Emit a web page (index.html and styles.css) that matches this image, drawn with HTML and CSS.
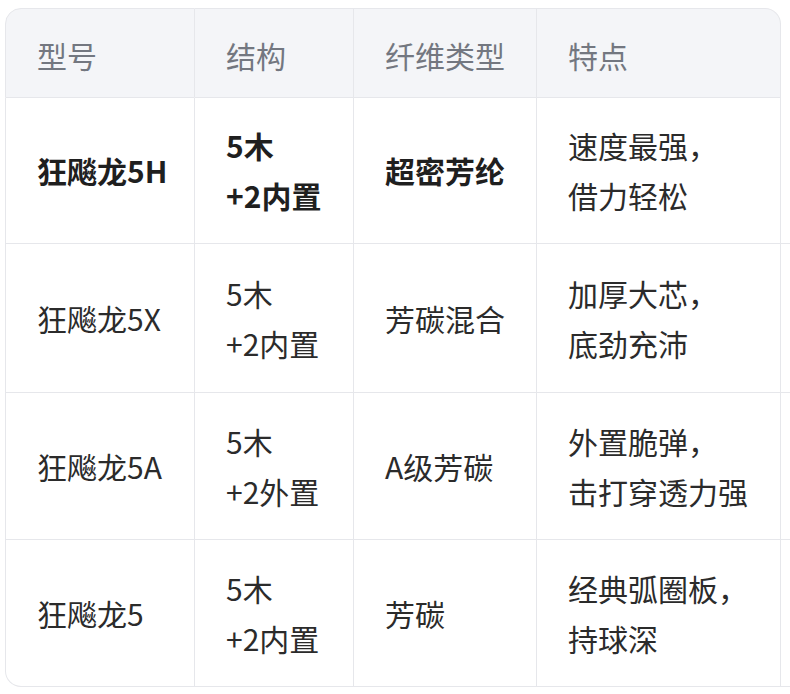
FILE: index.html
```html
<!DOCTYPE html>
<html lang="zh">
<head>
<meta charset="utf-8">
<link rel="stylesheet" href="styles.css">
</head>
<body>
<div class="wrap">
<table class="specs">
  <thead>
    <tr>
      <th class="c1">型号</th>
      <th class="c2">结构</th>
      <th class="c3">纤维类型</th>
      <th class="c4">特点</th>
      <th class="c5"></th>
    </tr>
  </thead>
  <tbody>
    <tr class="first">
      <td class="strong">狂飚龙5H</td>
      <td class="strong">5木<br>+2内置</td>
      <td class="strong">超密芳纶</td>
      <td>速度最强，<br>借力轻松</td>
      <td class="c5"></td>
    </tr>
    <tr class="tall">
      <td>狂飚龙5X</td>
      <td>5木<br>+2内置</td>
      <td>芳碳混合</td>
      <td>加厚大芯，<br>底劲充沛</td>
      <td class="c5"></td>
    </tr>
    <tr>
      <td>狂飚龙5A</td>
      <td>5木<br>+2外置</td>
      <td>A级芳碳</td>
      <td>外置脆弹，<br>击打穿透力强</td>
      <td class="c5"></td>
    </tr>
    <tr class="last">
      <td>狂飚龙5</td>
      <td>5木<br>+2内置</td>
      <td>芳碳</td>
      <td>经典弧圈板，<br>持球深</td>
      <td class="c5"></td>
    </tr>
  </tbody>
</table>
</div>
</body>
</html>
```

FILE: styles.css
```css
html, body {
  margin: 0;
  overflow: hidden;
  background: #ffffff;
}
body {
  padding: 8px 0 0 5px;
  font-family: "Noto Sans CJK SC", "Noto Sans", sans-serif;
}
.wrap {
  width: 806px;
}
.specs {
  border-collapse: separate;
  border-spacing: 0;
  table-layout: fixed;
  width: 806px;
  font-size: 30px;
  line-height: 50px;
  color: #2b2b2b;
}
.specs th,
.specs td {
  box-sizing: border-box;
  text-align: left;
  vertical-align: middle;
  white-space: nowrap;
  border-bottom: 1px solid #e6e7eb;
  border-right: 1px solid #e6e7eb;
}
.specs th {
  background: #f4f5f8;
  color: #737780;
  font-weight: 400;
  padding: 21px 31px 17px;
  border-top: 1px solid #e6e7eb;
}
.specs td {
  padding: 23px 0 23px 31px;
}
.specs tr.first td {
  padding-top: 22px;
  padding-bottom: 23px;
}
.specs tr.tall td {
  padding-top: 24px;
  padding-bottom: 24px;
}
.specs th:first-child,
.specs td:first-child {
  border-left: 1px solid #e6e7eb;
}
.specs th:first-child {
  border-top-left-radius: 16px;
}
.specs th.c4 {
  border-top-right-radius: 16px;
}
.specs tr.last td:first-child {
  border-bottom-left-radius: 16px;
}
.specs .c1 { width: 190px; }
.specs .c2 { width: 159px; }
.specs .c3 { width: 183px; }
.specs .c4 { width: 244px; }
.specs th.c5 {
  width: 30px;
  background: transparent;
  border-top: none;
  border-bottom: none;
}
.specs .c5 {
  border-right: none;
  padding: 0;
}
.specs td.strong {
  font-weight: 700;
  color: #1f1f1f;
}
```
